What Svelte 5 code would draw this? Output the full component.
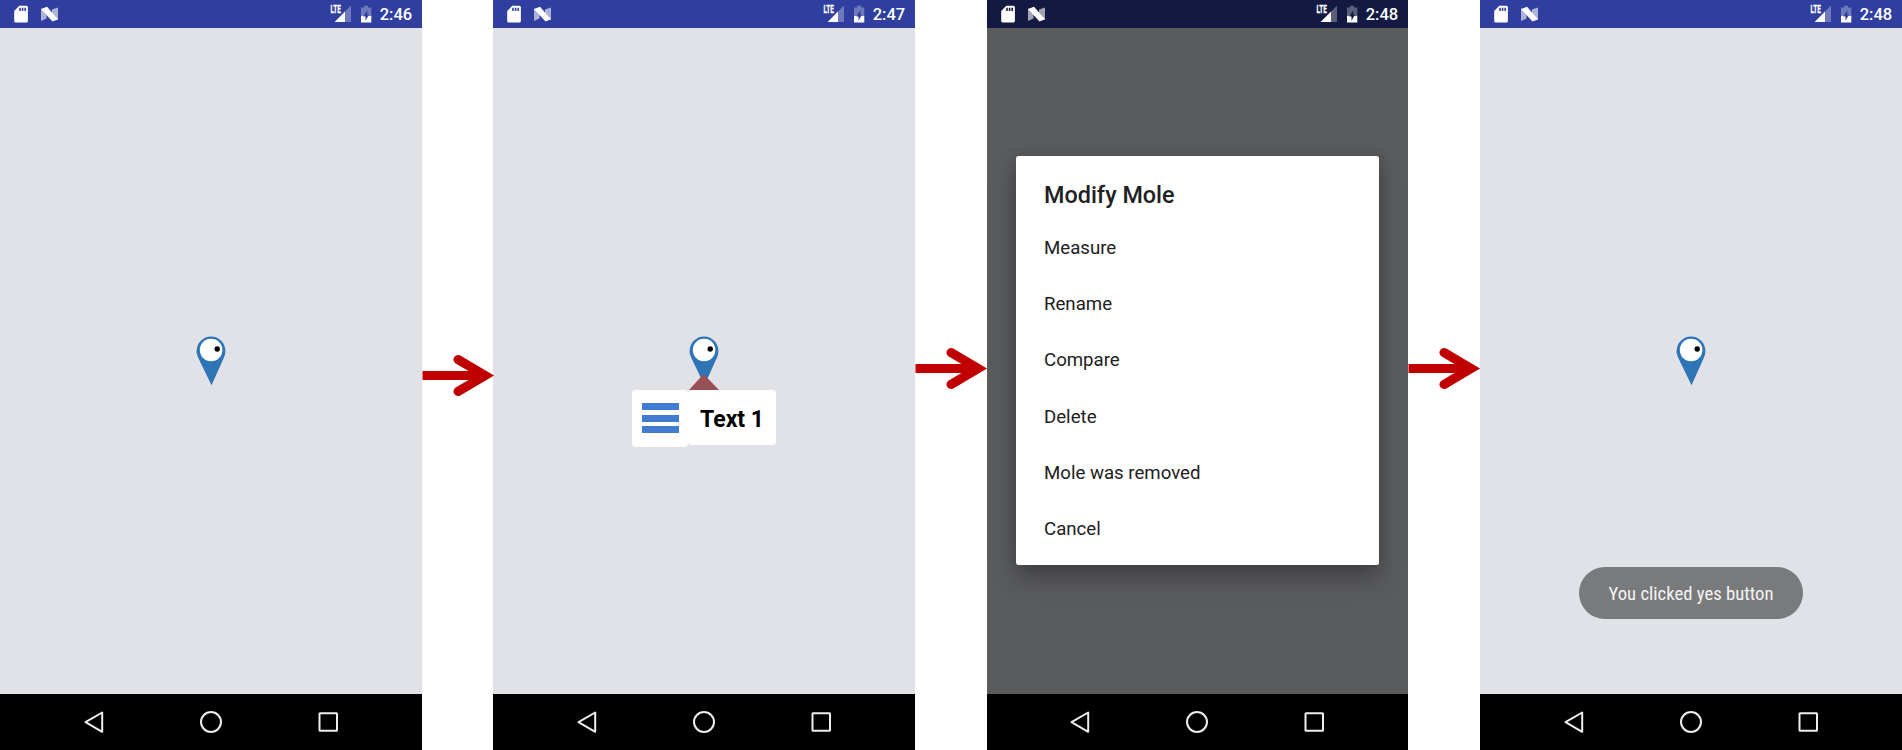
<script>
  const phones = [
    { time: '2:46', view: 'pin' },
    { time: '2:47', view: 'label' },
    { time: '2:48', view: 'dialog' },
    { time: '2:48', view: 'toast' }
  ];
  const items = ['Measure', 'Rename', 'Compare', 'Delete', 'Mole was removed', 'Cancel'];
</script>

<div class="flow">
  {#each phones as phone, i}
    {#if i > 0}
      <div class="gap" class:lower={i === 1}>
        <svg width="73" height="44" viewBox="0 0 73 44" fill="none" stroke="#c00000" stroke-width="9">
          <path d="M.5 21.500H62" />
          <path d="M36 5.500L63.200 21.500L36 37.500" stroke-linecap="round" stroke-miterlimit="8" />
        </svg>
      </div>
    {/if}
    <section class="phone" class:dimmed={phone.view === 'dialog'}>
      <header>
        <svg class="left" width="60" height="28" viewBox="0 0 60 28">
          <path fill="#fff" d="M19.3 5.8h7a1.6 1.6 0 0 1 1.6 1.6v13.500a1.6 1.6 0 0 1-1.6 1.6h-10.500a1.6 1.6 0 0 1-1.6-1.6V11z" />
          <path class="cut" d="M19.200 7.700h1.600v3.300h-1.600zM21.800 7.700h1.600v3.300h-1.600zM24.400 7.700H26v3.300h-1.600z" />
          <path fill="#fff" opacity=".6" d="M41 8.500V21l5.500-2.500V10zM58 7.500V20l-6-2.500V9.500z" />
          <path fill="#fff" d="M41 9l6-2.200L58 19.300 52.500 21.400z" />
        </svg>
        <svg class="right" width="46" height="28" viewBox="0 0 46 28">
          <path fill="#fff" opacity=".3" d="M21 5.500V22H4.700z" />
          <path fill="#fff" d="M15 11.500V22H4.700z" />
          <path class="cut" d="M0 5h11.700v8.900H0z" />
          <text x=".4" y="13.200" textLength="10.400" lengthAdjust="spacingAndGlyphs">LTE</text>
          <path fill="#fff" opacity=".3" d="M34 5.800h4v1.600h3.300v8.500H31V7.400h3z" />
          <path fill="#fff" d="M31 15.900h10.300v6.600H31z" />
          <path class="cut" d="M37.300 10.300l-4 6.300h2.200v4.200l3.600-6.200h-1.800z" />
        </svg>
        <time>{phone.time}</time>
      </header>
      <main>
        {#if phone.view === 'dialog'}
          <div class="dialog">
            <h1>Modify Mole</h1>
            <ul>
              {#each items as item}<li>{item}</li>{/each}
            </ul>
          </div>
        {:else}
          <svg class="marker" width="30" height="50" viewBox="0 0 30 50">
            <path fill="#2e75b6" d="M.6 15a14.400 14.600 0 0 1 28.800 0c0 3-.8 5.200-2.100 8L15.500 49.200 2.800 23C1.500 20.300.6 18 .6 15z" />
            <circle cx="15.100" cy="14" r="11.300" fill="#fff" />
            <circle cx="21.200" cy="13" r="2.700" />
          </svg>
        {/if}
        {#if phone.view === 'label'}
          <svg class="caret" width="30" height="16" viewBox="0 0 30 16"><path fill="#995052" d="M14.500 0L30 16H0z" /></svg>
          <div class="callout">
            <div class="menu"><i></i><i></i><i></i></div>
            <div class="caption">Text 1</div>
          </div>
        {/if}
        {#if phone.view === 'toast'}
          <div class="toast">
            <svg width="224" height="52" viewBox="0 0 224 52">
              <text x="29.500" y="32.700" textLength="165" lengthAdjust="spacingAndGlyphs">You clicked yes button</text>
            </svg>
          </div>
        {/if}
      </main>
      <footer>
        <svg width="422" height="56" viewBox="0 0 422 56" fill="none" stroke="#eee" stroke-width="2">
          <path stroke-linejoin="round" d="M102.200 18.500v19.300L85.500 28.200z" />
          <circle cx="211" cy="28" r="10" />
          <rect x="319.500" y="19.200" width="17.500" height="17.500" rx=".5" />
        </svg>
      </footer>
    </section>
  {/each}
</div>

<style>
  :global(body) { margin: 0; background: #fff; overflow: hidden; }
  .flow {
    display: grid;
    grid-template-columns: 422px 71px 422px 72px 421px 72px 422px;
    width: 1902px;
    height: 750px;
    font-family: Roboto, sans-serif;
  }
  .gap { padding-top: 347px; }
  .gap.lower { padding-top: 354px; }
  .gap svg { display: block; position: relative; z-index: 2; }
  .phone {
    --bar: #303f9f;
    display: flex;
    flex-direction: column;
    min-width: 0;
    overflow: hidden;
    background: #e1e2e8;
  }
  .dimmed {
    --bar: #131940;
    background: #5a5b5d;
  }
  .dimmed .right { margin-left: 269px; }
  .dimmed footer svg { margin-left: -.7px; }
  header {
    display: flex;
    height: 28px;
    flex: none;
    background: var(--bar);
    color: #fff;
  }
  header svg { display: block; flex: none; }
  .right { margin-left: 270px; }
  .cut { fill: var(--bar); }
  .right text { font: 700 10.300px Roboto, sans-serif; fill: #fff; stroke: #fff; stroke-width: .3px; }
  time { margin-left: 3.700px; font-size: 16.500px; font-weight: 500; line-height: 29px; }
  main { position: relative; flex: 1; }
  footer { height: 56px; flex: none; background: #000; }
  footer svg { display: block; }
  .marker { position: absolute; left: 196px; top: 308px; }
  .caret { position: absolute; left: 196px; top: 346px; }
  .callout {
    position: absolute;
    left: 139px;
    top: 362px;
    display: flex;
    align-items: flex-start;
  }
  .menu {
    box-sizing: border-box;
    width: 56px;
    height: 56.500px;
    padding: 13px 9px 0 9.500px;
    display: flex;
    flex-direction: column;
    gap: 4.500px;
    background: #fff;
    border-radius: 4px;
  }
  .menu i { height: 7px; background: #427bd2; }
  .caption {
    box-sizing: border-box;
    width: 88px;
    height: 55px;
    padding-left: 12px;
    background: #fff;
    border-radius: 4px;
    color: #000;
    font-size: 23px;
    font-weight: 700;
    line-height: 60px;
    white-space: nowrap;
  }
  .dialog {
    box-sizing: border-box;
    width: 362.500px;
    height: 409px;
    margin: 128px 0 0 29px;
    padding: 24px 28px 0;
    background: #fff;
    border-radius: 2.500px;
    box-shadow: 0 14px 24px rgba(0, 0, 0, .26), 0 0 14px rgba(0, 0, 0, .14);
    color: #212121;
  }
  h1 { margin: 0; font-size: 23.400px; font-weight: 500; line-height: 30px; }
  ul { list-style: none; margin: 10px 0 0; padding: 0; }
  li { height: 56.200px; font-size: 18.650px; line-height: 56.200px; }
  .toast {
    position: absolute;
    left: 99px;
    top: 539px;
    width: 224px;
    height: 52px;
    border-radius: 26px;
    background: #797a7b;
  }
  .toast svg { display: block; }
  .toast text { font: 400 18.750px "Roboto Condensed", Roboto, sans-serif; fill: #f4f4f4; }
</style>
